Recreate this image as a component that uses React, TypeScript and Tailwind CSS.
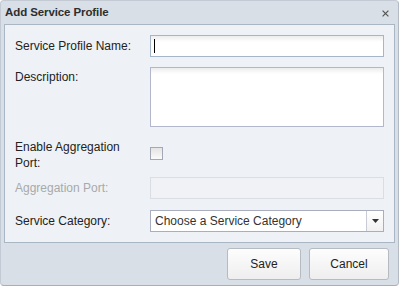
const font = "font-['Liberation_Sans',Arial,sans-serif]"

const inputBox =
  'bg-white border bg-[linear-gradient(#ececec,#fff_6px)]'

function Label({ children, disabled }: { children: React.ReactNode; disabled?: boolean }) {
  return (
    <div
      className={`w-[135px] shrink-0 text-[12px] leading-[16px] ${
        disabled ? 'text-[#a9a9a9]' : 'text-[#222]'
      }`}
    >
      {children}
    </div>
  )
}

export default function App() {
  return (
    <div className={`${font} w-[399px] h-[286px] bg-white`}>
      <div className="w-[399px] h-[286px] flex flex-col bg-[#d8dfe7] border border-[#c3cad3] border-r-[#b3bac3] border-b-[#a8afb8] rounded-[4px]">
        {/* title bar */}
        <div className="h-[23px] flex items-center justify-between pl-[4px] pr-[9px]">
          <span className="text-[11.5px] font-bold text-[#2e2e2e] tracking-[-0.1px]">
            Add Service Profile
          </span>
          <svg width="7" height="7" viewBox="0 0 7 7" className="mt-[1px]">
            <path d="M0.6 0.6 L6.4 6.4 M6.4 0.6 L0.6 6.4" stroke="#555" strokeWidth="1.2" />
          </svg>
        </div>

        {/* form panel */}
        <div className="mx-[3px] h-[219px] bg-[#eef2f6] border border-[#a9b6c4] flex flex-col pl-[10px] pr-[10px]">
          <div className="mt-[10px] flex items-center h-[22px]">
            <Label>Service Profile Name:</Label>
            <div className={`flex-1 h-[22px] ${inputBox} border-[#a4b6c8] flex items-center pl-[3px]`}>
              <div className="w-px h-[14px] bg-black" />
            </div>
          </div>

          <div className="mt-[10px] flex items-start h-[60px]">
            <div className="pt-[2px]">
              <Label>Description:</Label>
            </div>
            <div className={`flex-1 h-[60px] ${inputBox} border-[#b3b7cb]`} />
          </div>

          <div className="mt-[12px] flex items-start h-[32px]">
            <Label>
              Enable Aggregation
              <br />
              Port:
            </Label>
            <div className="mt-[8px] w-[13px] h-[13px] border border-[#a3a7b6] bg-[linear-gradient(#e4e4e4,#fafafa)]" />
          </div>

          <div className="mt-[6px] flex items-center h-[22px]">
            <Label disabled>Aggregation Port:</Label>
            <div className="flex-1 h-[22px] bg-[#f0f2f5] border border-[#d9dee4]" />
          </div>

          <div className="mt-[11px] flex items-center h-[22px]">
            <Label>Service Category:</Label>
            <div className="flex-1 h-[22px] bg-white border border-[#a9adbd] flex items-center">
              <span className="flex-1 pl-[4px] text-[12px] text-[#333]">Choose a Service Category</span>
              <div className="w-[17px] h-full border-l border-[#c9ccd6] flex items-center justify-center bg-[linear-gradient(#fff,#f1f1f1)]">
                <svg width="7" height="4" viewBox="0 0 7 4">
                  <path d="M0 0 H7 L3.5 4 Z" fill="#333" />
                </svg>
              </div>
            </div>
          </div>
        </div>

        {/* footer */}
        <div className="flex justify-end gap-[8px] pr-[9px] pt-[5px]">
          <button className="w-[74px] h-[32px] rounded-[3px] border border-[#b6bbc2] bg-[linear-gradient(#fdfdfd,#eeeeee)] text-[12px] text-[#222]">
            Save
          </button>
          <button className="w-[80px] h-[32px] rounded-[3px] border border-[#b6bbc2] bg-[linear-gradient(#fdfdfd,#eeeeee)] text-[12px] text-[#222]">
            Cancel
          </button>
        </div>
      </div>
    </div>
  )
}
